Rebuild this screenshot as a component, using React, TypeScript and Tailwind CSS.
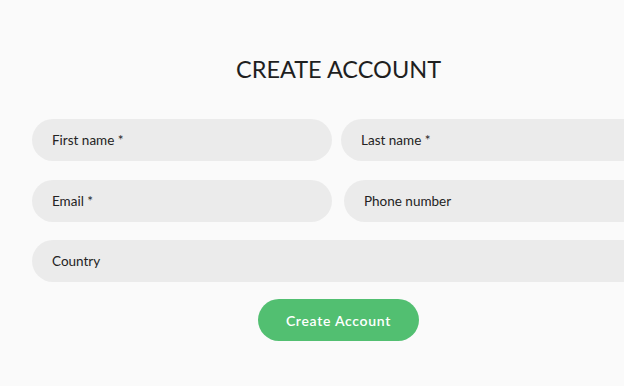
const Field = ({ label, className }: { label: string; className: string }) => (
  <div
    className={`h-[42px] rounded-full bg-[#ebebeb] pl-5 flex items-center text-[13.5px] text-[#232323] ${className}`}
  >
    {label}
  </div>
);

export default function App() {
  return (
    <div
      className="w-[624px] h-[386px] overflow-hidden bg-[#fafafa]"
      style={{ fontFamily: '"Lato", "Open Sans", sans-serif' }}
    >
      <div className="ml-[32px] w-[613px] pt-[53px]">
        <h1 className="text-center text-[23.5px] leading-8 text-[#1f1f1f]">
          CREATE ACCOUNT
        </h1>

        <div className="mt-[34px] flex flex-col">
          <div className="flex gap-[9px]">
            <Field label="First name *" className="w-[300px]" />
            <Field label="Last name *" className="w-[304px]" />
          </div>
          <div className="mt-[19px] flex gap-[12px]">
            <Field label="Email *" className="w-[300px]" />
            <Field label="Phone number" className="w-[301px]" />
          </div>
          <Field label="Country" className="mt-[18px] w-full" />
        </div>

        <div className="mt-[17px] flex justify-center">
          <button
            type="button"
            className="h-[42px] w-[161px] rounded-full bg-[#52bf71] text-[14px] font-semibold tracking-[0.7px] text-white"
          >
            Create Account
          </button>
        </div>
      </div>
    </div>
  );
}
